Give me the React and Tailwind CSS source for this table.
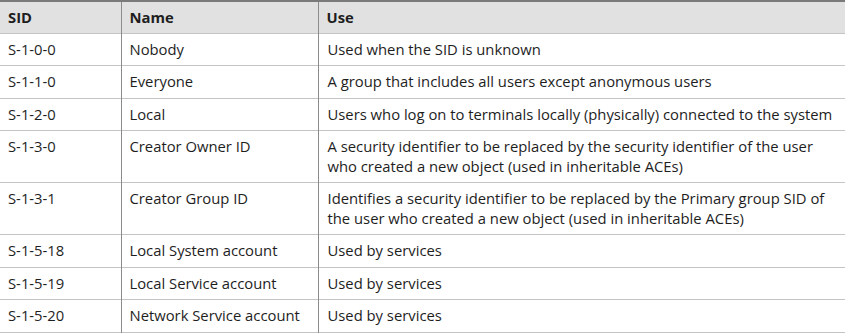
import React from "react";

const rows = [
  { sid: "S-1-0-0", name: "Nobody", use: "Used when the SID is unknown" },
  { sid: "S-1-1-0", name: "Everyone", use: "A group that includes all users except anonymous users" },
  { sid: "S-1-2-0", name: "Local", use: "Users who log on to terminals locally (physically) connected to the system" },
  {
    sid: "S-1-3-0",
    name: "Creator Owner ID",
    use: ["A security identifier to be replaced by the security identifier of the user", "who created a new object (used in inheritable ACEs)"],
  },
  {
    sid: "S-1-3-1",
    name: "Creator Group ID",
    use: ["Identifies a security identifier to be replaced by the Primary group SID of", "the user who created a new object (used in inheritable ACEs)"],
  },
  { sid: "S-1-5-18", name: "Local System account", use: "Used by services" },
  { sid: "S-1-5-19", name: "Local Service account", use: "Used by services" },
  { sid: "S-1-5-20", name: "Network Service account", use: "Used by services" },
];

const App = () => {
  return (
    <div className="w-[845px] h-[335px] bg-white overflow-hidden text-[#1e1e1e] font-['Open_Sans',sans-serif] text-[14.8px]">
      <table className="w-full border-collapse table-fixed border-t-2 border-t-[#7a7a7a]">
        <colgroup>
          <col className="w-[121px]" />
          <col className="w-[197px]" />
          <col />
        </colgroup>
        <thead>
          <tr className="bg-[#e1e1e1] border-b border-b-[#c4c4c4]">
            <th className="h-[32px] px-2 text-left font-bold leading-[19.5px] border-r border-r-[#8c8c8c]">SID</th>
            <th className="px-2 text-left font-bold leading-[19.5px] border-r border-r-[#8c8c8c]">Name</th>
            <th className="px-2 text-left font-bold leading-[19.5px]">Use</th>
          </tr>
        </thead>
        <tbody>
          {rows.map((r) => (
            <tr key={r.sid} className="border-b border-b-[#c4c4c4]">
              <td className="align-top py-[6px] px-2 leading-[19.5px] border-r border-r-[#8c8c8c]">{r.sid}</td>
              <td className="align-top py-[6px] px-2 leading-[19.5px] border-r border-r-[#8c8c8c]">{r.name}</td>
              <td className="align-top py-[6px] pl-[9px] pr-2 leading-[19.5px]">
                {Array.isArray(r.use) ? (
                  <>
                    {r.use[0]}
                    <br />
                    {r.use[1]}
                  </>
                ) : (
                  r.use
                )}
              </td>
            </tr>
          ))}
        </tbody>
      </table>
    </div>
  );
};

export default App;
